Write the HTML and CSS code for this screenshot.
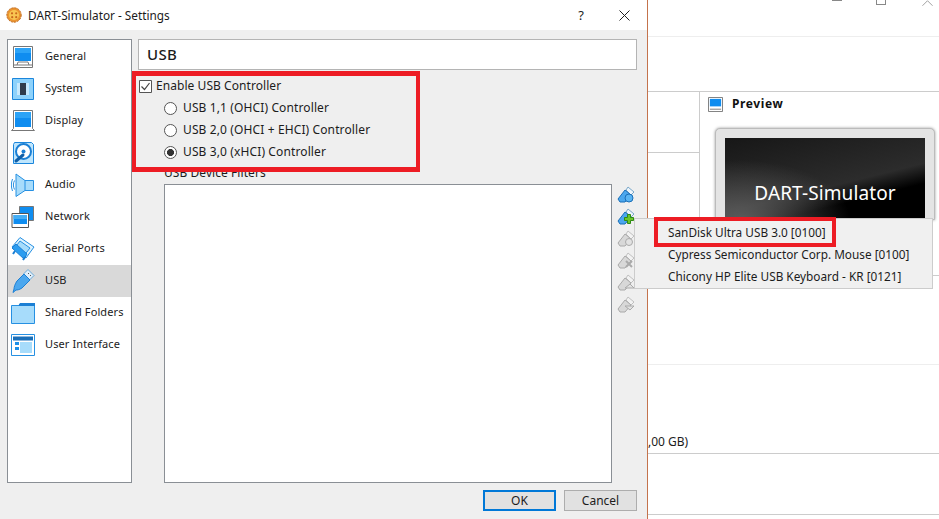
FILE: index.html
```html
<!DOCTYPE html>
<html lang="en">
<head>
<meta charset="utf-8">
<title>DART-Simulator - Settings</title>
<link rel="stylesheet" href="styles.css">
</head>
<body>
<div class="page">
  <section class="dialog">
    <header class="titlebar">
      <svg class="app-icon" viewBox="0 0 16 16"><circle cx="8" cy="8" r="7.200" fill="#ea9430" stroke="#c06a1c" stroke-width="1" stroke-dasharray="2.200 .9"/><circle cx="8" cy="8" r="5" fill="#f8c552"/><circle cx="6" cy="6.300" r="1.100" fill="#c9661c"/><circle cx="10.200" cy="6.300" r="1.100" fill="#c9661c"/><circle cx="6.200" cy="10.200" r="1.100" fill="#c9661c"/><circle cx="10.200" cy="10.200" r="1.100" fill="#c9661c"/></svg>
      <span class="title-text">DART-Simulator - Settings</span>
      <span class="help">?</span>
      <svg class="close" viewBox="0 0 11 11"><path d="M.5.5l10 10M10.500.5l-10 10" stroke="#222" fill="none"/></svg>
    </header>
    <div class="body">
      <nav class="sidebar">
        <div class="nav-item"><svg class="nav-icon" viewBox="0 0 24 24"><path d="M2.500 1.500h19v21h-19z" fill="#fff" stroke="#777"/><path d="M4 3h16v13H4z" fill="#0f8df0"/><path d="M4 3h16v5H4z" fill="#2ba3f7"/><path d="M3 20h18M6 20l1-3h10l1 3" fill="none" stroke="#777"/></svg><span>General</span></div>
        <div class="nav-item"><svg class="nav-icon" viewBox="0 0 24 24"><path d="M1.500 1.500h21v21h-21z" fill="#8ed2fb" stroke="#1b86dc"/><path d="M9 6h6v12H9z" fill="#2f3c4c"/><path d="M6 7h3M6 9h3M6 11h3M6 13h3M6 15h3M6 17h3M15 7h3M15 9h3M15 11h3M15 13h3M15 15h3M15 17h3" stroke="#fff"/></svg><span>System</span></div>
        <div class="nav-item"><svg class="nav-icon" viewBox="0 0 24 24"><path d="M2.500 1.500h19v18l2 2h-23l2-2z" fill="#fff" stroke="#777"/><path d="M4 3h16v15H4z" fill="#0f8df0"/><path d="M4 3h16v6H4z" fill="#2ba3f7"/></svg><span>Display</span></div>
        <div class="nav-item"><svg class="nav-icon" viewBox="0 0 24 24"><path d="M3.500 1.500h17l2 2v19h-20v-19z" fill="#bfe6fd" stroke="#1b86dc"/><circle cx="12.500" cy="10.500" r="7.500" fill="#fff" stroke="#1b7fd4" stroke-width="2"/><circle cx="12.500" cy="10.500" r="2" fill="#1b7fd4"/><path d="M5 20l7-6" stroke="#0f5fa8" stroke-width="3" stroke-linecap="round"/></svg><span>Storage</span></div>
        <div class="nav-item"><svg class="nav-icon" viewBox="0 0 24 24"><path d="M5 1l9 6.500h8.500v10H14l-9 6z" fill="#a7dcfb" stroke="#2690e2"/><path d="M14 7.500v10" stroke="#2690e2" fill="none"/><path d="M3.500 7.500c-1.500 3-1.500 6 0 9M1.500 6c-1.500 4-1.500 8 0 12" stroke="#2690e2" fill="none"/></svg><span>Audio</span></div>
        <div class="nav-item"><svg class="nav-icon" viewBox="0 0 24 24"><path d="M8.500 1.500h14v14h-14z" fill="#0f8df0" stroke="#777"/><path d="M1 8.500h16.500v14H1z" fill="#fff" stroke="#555"/><path d="M2.500 10h13.500v9H2.500z" fill="#0f8df0"/><path d="M2.500 10h13.500v4H2.500z" fill="#45aef5"/></svg><span>Network</span></div>
        <div class="nav-item"><svg class="nav-icon" viewBox="0 0 24 24"><path d="M9 .5L23 10l-8 11L1 10z" fill="#dff3fe" stroke="#2690e2"/><path d="M9 4l10 7-5.500 7L4 10.500z" fill="#a7dcfb" stroke="#2690e2"/><path d="M1 11l4-4 11 10-3 5z" fill="#2c9df0" stroke="#1b7fd4"/><path d="M2 17l2-3M12 23l2-3" stroke="#1b7fd4" stroke-width="2"/></svg><span>Serial Ports</span></div>
        <div class="nav-item active"><svg class="nav-icon" viewBox="0 0 24 24"><path d="M17 .5l6 6-4.500 4.500-6-6z" fill="#dfeefa" stroke="#6aa9d8"/><path d="M13 5l6 6-8 8c-3 2-5 2-6 2l-3 2.500 1-3.500c0-2 1-5 3-8z" fill="#4ba7ee" stroke="#1b7fd4"/><path d="M17 4l1 1M19 6l1 1" stroke="#555"/></svg><span>USB</span></div>
        <div class="nav-item"><svg class="nav-icon" viewBox="0 0 24 24"><path d="M.5 4.500v18h23v-20h-14l-2 2z" fill="#a7dcfb" stroke="#2690e2"/><path d="M9 2h15v3H7z" fill="#1b7fd4"/></svg><span>Shared Folders</span></div>
        <div class="nav-item"><svg class="nav-icon" viewBox="0 0 24 24"><path d="M.5 1.500h23v21h-23z" fill="#fff" stroke="#2690e2"/><path d="M2 3.500h20v4H2z" fill="#1b6fb8"/><path d="M4 9h4v3H4zM4 14h4v3H4z" fill="#1b8fe8"/><path d="M9 9h12v11H9z" fill="#a7dcfb"/></svg><span>User Interface</span></div>
      </nav>
      <main class="content">
        <h1 class="page-title">USB</h1>
        <div class="group">
          <label class="check-row"><svg class="check" viewBox="0 0 13 13"><path d="M.5.5h12v12H.5z" fill="#fff" stroke="#555"/><path d="M2.500 6.500l3 3 5-6.500" fill="none" stroke="#444" stroke-width="1.200"/></svg>Enable USB Controller</label>
          <label class="radio-row"><span class="radio"></span>USB 1,1 (OHCI) Controller</label>
          <label class="radio-row"><span class="radio"></span>USB 2,0 (OHCI + EHCI) Controller</label>
          <label class="radio-row"><span class="radio on"></span>USB 3,0 (xHCI) Controller</label>
          <div class="filters-label">USB Device Filters</div>
          <div class="filters">
            <div class="filter-box"></div>
            <div class="tools">
              <svg class="tool" viewBox="0 0 18 18"><path d="M11 1l6 5-3 3-5-5z" fill="#eef5fb" stroke="#7aa7c9"/><path d="M8 4l6 5-6 7H3l-2-3z" fill="#4ba7ee" stroke="#1b6fb8"/><circle cx="12" cy="12" r="4" fill="#5ab4f2" stroke="#1b6fb8"/></svg>
              <svg class="tool" viewBox="0 0 18 18"><path d="M11 1l6 5-3 3-5-5z" fill="#eef5fb" stroke="#7aa7c9"/><path d="M8 4l6 5-6 7H3l-2-3z" fill="#4ba7ee" stroke="#1b6fb8"/><path d="M10.500 6.500h3v3h3v3h-3v3h-3v-3h-3v-3h3z" fill="#6cc629" stroke="#2e8b12"/></svg>
              <svg class="tool" viewBox="0 0 18 18"><path d="M11 1l6 5-3 3-5-5z" fill="#f2f2f2" stroke="#c0c0c0"/><path d="M8 4l6 5-6 7H3l-2-3z" fill="#d8d8d8" stroke="#aaa"/><circle cx="12" cy="12" r="3.500" fill="#e2e2e2" stroke="#aaa"/></svg>
              <svg class="tool" viewBox="0 0 18 18"><path d="M11 1l6 5-3 3-5-5z" fill="#f2f2f2" stroke="#c0c0c0"/><path d="M8 4l6 5-6 7H3l-2-3z" fill="#d8d8d8" stroke="#aaa"/><path d="M9 9l6 6M15 9l-6 6" stroke="#aaa" stroke-width="2"/></svg>
              <svg class="tool" viewBox="0 0 18 18"><path d="M11 1l6 5-3 3-5-5z" fill="#f2f2f2" stroke="#c0c0c0"/><path d="M8 4l6 5-6 7H3l-2-3z" fill="#d8d8d8" stroke="#aaa"/><path d="M8 14l5-4 4 4z" fill="#e2e2e2" stroke="#aaa"/></svg>
              <svg class="tool" viewBox="0 0 18 18"><path d="M11 1l6 5-3 3-5-5z" fill="#f2f2f2" stroke="#c0c0c0"/><path d="M8 4l6 5-6 7H3l-2-3z" fill="#d8d8d8" stroke="#aaa"/><path d="M8 10l5 4 4-4z" fill="#e2e2e2" stroke="#aaa"/></svg>
            </div>
          </div>
        </div>
        <footer class="buttons">
          <button class="btn primary">OK</button>
          <button class="btn">Cancel</button>
        </footer>
      </main>
    </div>
  </section>
  <aside class="behind">
    <div class="win-controls">
      <span class="win-min"></span>
      <span class="win-max"></span>
      <svg class="win-close" viewBox="0 0 12 6"><path d="M.5 6L6 .5 11.500 6" fill="none" stroke="#999"/></svg>
    </div>
    <div class="toolbar"></div>
    <div class="details">
      <div class="details-left"><div class="left-cell"></div></div>
      <div class="preview">
        <div class="preview-head"><svg class="preview-icon" viewBox="0 0 16 16"><path d="M.5.5h15v15H.5z" fill="#fff" stroke="#777"/><path d="M2 2h12v8H2z" fill="#0f8df0"/><path d="M2 13h12" stroke="#777"/></svg><span>Preview</span></div>
        <div class="monitor"><div class="screen">DART-Simulator</div></div>
      </div>
    </div>
    <div class="band-a"></div>
    <div class="band-b"><span>,00 GB)</span></div>
    <div class="band-c"></div>
  </aside>
  <div class="annot annot-group"></div>
  <div class="menu">
    <div class="menu-item">SanDisk Ultra USB 3.0 [0100]</div>
    <div class="menu-item">Cypress Semiconductor Corp. Mouse [0100]</div>
    <div class="menu-item">Chicony HP Elite USB Keyboard - KR [0121]</div>
  </div>
  <div class="annot annot-menu"></div>
</div>
</body>
</html>
```
FILE: styles.css
```css
* { box-sizing: border-box; }
html, body { margin: 0; height: 100%; }
body { background: #fff; overflow: hidden; font: 12px/16px "Noto Sans", "Liberation Sans", sans-serif; color: #1c1c1c; }
.page { position: relative; display: flex; width: 939px; height: 519px; overflow: hidden; }

.dialog { flex: none; width: 648px; height: 519px; display: flex; flex-direction: column; border-right: 1px solid #c4734c; background: #efefef; }
.titlebar { flex: none; height: 30px; background: #fff; display: flex; align-items: center; padding: 0 17px 0 6px; }
.app-icon { width: 16px; height: 16px; margin-right: 6px; }
.title-text { flex: 1; font-size: 11.800px; margin-bottom: 1px; }
.help { margin-right: 35px; font-size: 13px; }
.close { width: 11px; height: 11px; }

.body { flex: 1; display: flex; padding: 9px 10px 8px 7px; }
.sidebar { flex: none; width: 125px; height: 444px; padding-top: 1px; background: #fff; border: 1px solid #8a8f95; font-size: 11px; letter-spacing: .1px; }
.nav-item { height: 32px; display: flex; align-items: center; padding-left: 3px; }
.nav-item span { margin-bottom: 2px; }
.nav-item.active { background: #d9d9d9; }
.nav-icon { flex: none; width: 24px; height: 24px; margin-right: 10px; }

.content { flex: 1; margin-left: 6px; display: flex; flex-direction: column; min-width: 0; }
.page-title { margin: 0; height: 31px; padding-left: 8px; background: #fff; border: 1px solid #b4b4b4; font-size: 15px; line-height: 29px; font-weight: 500; letter-spacing: .4px; }
.group { flex: none; padding-top: 7px; letter-spacing: .06px; }
.check-row { display: flex; align-items: center; height: 18px; padding-left: 1px; margin-bottom: 2px; }
.check { width: 13px; height: 13px; margin-right: 4px; }
.radio-row { display: flex; align-items: center; height: 22px; padding-left: 26px; letter-spacing: .12px; }
.radio { flex: none; width: 13px; height: 13px; margin-right: 6px; border: 1px solid #555; border-radius: 50%; background: #fff; }
.radio.on { background: radial-gradient(circle, #333 0 3.200px, #fff 3.800px); }
.filters-label { padding-left: 26px; height: 16px; margin-top: 2px; }
.filters { display: flex; margin-top: 3px; margin-left: 26px; }
.filter-box { flex: none; width: 448px; height: 299px; background: #fff; border: 1px solid #8a8f95; }
.tools { margin-left: 5px; padding-top: 2px; display: flex; flex-direction: column; gap: 4px; }
.tool { width: 18px; height: 18px; }
.buttons { display: flex; justify-content: flex-end; gap: 8px; margin-top: 7px; }
.btn { width: 73px; height: 21px; padding: 0; background: #e1e1e1; border: 1px solid #adadad; font: inherit; line-height: 17px; color: #1c1c1c; }
.btn.primary { border: 2px solid #0078d7; }

.behind { flex: 1; display: flex; flex-direction: column; min-width: 0; }
.win-controls { height: 37px; display: flex; align-items: flex-start; padding-left: 184px; border-bottom: 1px solid #eee; }
.win-min { width: 10px; height: 1px; background: #888; }
.win-max { width: 10px; height: 5px; margin-left: 34px; border: 1px solid #888; border-top: 0; }
.win-close { width: 11px; height: 6px; margin-left: 36px; }
.toolbar { height: 54px; }
.details { height: 185px; display: flex; border-top: 1px solid #ccc; border-bottom: 1px solid #ccc; }
.details-left { flex: none; width: 52px; border-right: 1px solid #ccc; }
.left-cell { height: 61px; border-bottom: 1px solid #ccc; }
.preview { flex: 1; padding: 0 0 0 15px; overflow: hidden; }
.preview-head { display: flex; align-items: center; height: 23px; margin-left: -7px; padding-top: 1px; font-weight: 700; letter-spacing: .6px; color: #111; }
.preview-icon { width: 15px; height: 15px; margin-right: 9px; }
.monitor { width: 220px; height: 92px; margin-top: 13px; padding: 9px 9px 0; overflow: hidden; background: #e4e4e4; border: 1px solid #bbb; border-radius: 5px 5px 0 0; box-shadow: 0 0 3px #999; }
.screen { height: 120px; padding-top: 42px; text-align: center; color: #fff; font-size: 19px; line-height: 26px; letter-spacing: .1px; background: radial-gradient(ellipse 110px 60px at 15px 82px, #5c5c5c 0, rgba(60,60,60,0) 100%), linear-gradient(166deg, #171717 0, #2c2c2c 44%, #000 56%); }
.band-a { height: 89px; border-bottom: 1px solid #eee; }
.band-b { height: 89px; border-bottom: 1px solid #ccc; display: flex; align-items: flex-end; padding-bottom: 3px; }
.band-c { height: 61px; border-bottom: 1px solid #ccc; }

.annot { position: absolute; border: 4px solid #ed1c24; }
.annot-group { left: 132px; top: 71px; width: 288px; height: 101px; border-width: 5px 4px; }
.menu { position: absolute; left: 634px; top: 218px; width: 299px; height: 71px; padding: 2px 0 0 33px; background: #f0f0f0; border: 1px solid #ccc; font-size: 11.800px; }
.menu-item { height: 22px; line-height: 22px; white-space: nowrap; }
.annot-menu { left: 654px; top: 217px; width: 182px; height: 30px; }
```
